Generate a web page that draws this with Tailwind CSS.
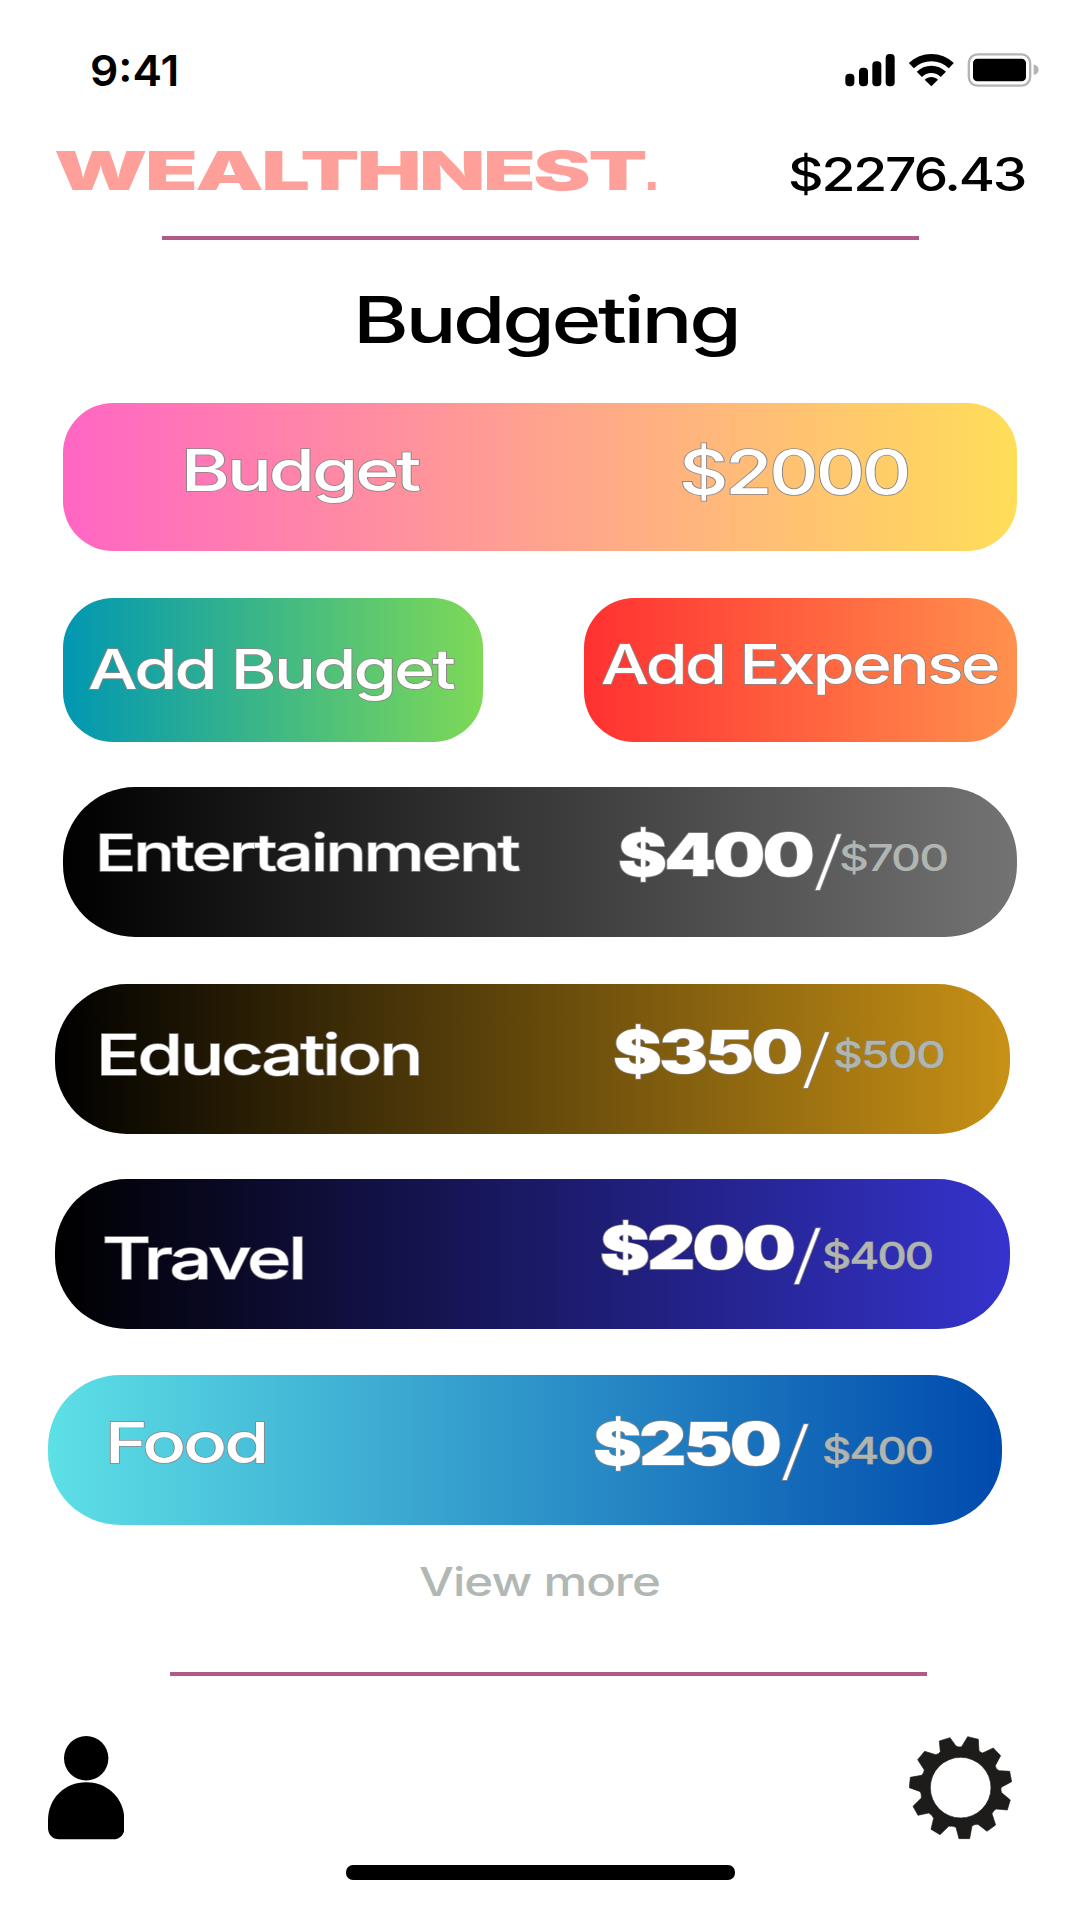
<!DOCTYPE html>
<html lang="en">
<head>
<meta charset="utf-8">
<title>WealthNest – Budgeting</title>
<script src="https://cdn.jsdelivr.net/npm/@tailwindcss/browser@4"></script>
</head>
<body class="bg-white">
<main class="flex h-[1920px] w-[1080px] flex-col overflow-hidden bg-white font-[Inter,sans-serif] leading-none whitespace-nowrap text-black">

  <!-- Status bar -->
  <div class="flex h-[143px] shrink-0 items-start justify-between pr-[20px] pl-[89.9px]">
    <span class="mt-[49px] origin-left scale-x-[1.03] text-[43px] font-semibold">9:41</span>
    <svg class="mt-[30px] h-[80px] w-[240px]" viewBox="0 0 720 240">
      <rect x="76" y="131" width="27" height="38" rx="12"/>
      <rect x="117" y="113" width="27" height="56" rx="12"/>
      <rect x="157" y="94" width="27" height="75" rx="12"/>
      <rect x="197" y="72" width="27" height="97" rx="12"/>
      <g fill="none" stroke="#000" stroke-width="22">
        <path d="M274 107C308 75 360 75 394 107"/>
        <path d="M298 133C318 113 350 113 370 133"/>
      </g>
      <path d="M314 149C326 138 342 138 354 149L334 169Z"/>
      <rect x="446.500" y="73" width="184" height="94" rx="26" fill="none" stroke="#b4b4b4" stroke-width="7"/>
      <rect x="459" y="86" width="159" height="68" rx="13"/>
      <path d="M641 103C651 106 656 112 656 119S651 132 641 135Z" fill="#b4b4b4"/>
    </svg>
  </div>

  <!-- Brand and balance -->
  <header class="flex h-[93.300px] shrink-0 items-start pt-px pl-[54.2px]">
    <span class="w-[370px] shrink-0 origin-left scale-x-[1.6] text-[54px] font-black tracking-[-0.03em] text-[#ff9f99]">WEALTHNEST</span>
    <span class="ml-[220px] w-[14px] shrink-0 font-['Liberation_Sans'] text-[54px] font-bold text-[#ff9f99]">.</span>
    <span class="mt-[7px] ml-[129.7px] w-[198px] shrink-0 origin-left scale-x-[1.2] text-[46px] font-medium tracking-[-0.04em]">$2276.43</span>
  </header>
  <div class="ml-[162px] h-[4px] w-[757px] shrink-0 bg-[#b05a89]"></div>

  <h1 class="mt-[47.600px] ml-[352.9px] h-[115px] w-[293px] shrink-0 origin-left scale-x-[1.315] text-[64.6px] font-medium tracking-[-0.04em]">Budgeting</h1>

  <!-- Total budget -->
  <section class="ml-[62.700px] flex h-[148.5px] w-[954.6px] shrink-0 items-start rounded-[50px] bg-linear-to-r/srgb from-[#ff66c4] to-[#ffde59] pt-px text-white [paint-order:stroke_fill] [-webkit-text-stroke:1.6px_#8c8686]">
    <span class="mt-[38px] ml-[118.100px] w-[183px] shrink-0 origin-left scale-x-[1.297] text-[57.5px] font-medium tracking-[-0.04em]">Budget</span>
    <span class="mt-[38.5px] ml-[315.300px] w-[183px] shrink-0 origin-left scale-x-[1.253] text-[61px] font-medium tracking-[-0.04em]">$2000</span>
  </section>

  <!-- Actions -->
  <div class="mt-[46.2px] flex h-[144px] shrink-0 gap-[101.2px] pl-[62.700px] text-white [paint-order:stroke_fill] [-webkit-text-stroke:1.6px_#8c8686]">
    <button class="flex w-[420.1px] shrink-0 items-start rounded-[50px] bg-linear-to-r/srgb from-[#0097b2] to-[#7ed957]">
      <span class="mt-[43.6px] ml-[25.500px] w-[290px] shrink-0 origin-left scale-x-[1.259] text-left text-[55.5px] leading-none font-medium tracking-[-0.04em]">Add Budget</span>
    </button>
    <button class="flex w-[433.3px] shrink-0 items-start rounded-[50px] bg-linear-to-r/srgb from-[#ff3131] to-[#ff914d]">
      <span class="mt-[39.6px] ml-[16.800px] w-[322px] shrink-0 origin-left scale-x-[1.232] text-left text-[55px] leading-none font-medium tracking-[-0.04em]">Add Expense</span>
    </button>
  </div>

  <!-- Categories -->
  <section class="flex shrink-0 flex-col text-white [paint-order:stroke_fill] [-webkit-text-stroke:1.4px_#8c8686]">
    <div class="mt-[45.5px] ml-[62.700px] flex h-[150px] w-[954.6px] items-start rounded-[72px] bg-linear-to-r/srgb from-[#000000] to-[#737373] pt-px">
      <span class="mt-[39px] ml-[32.8px] w-[316px] shrink-0 origin-left scale-x-[1.34] text-[51px] font-medium tracking-[-0.04em]">Entertainment</span>
      <span class="mt-[38px] ml-[206.6px] w-[154px] shrink-0 origin-left scale-x-[1.256] text-[58.7px] font-black tracking-[-0.04em]">$400</span>
      <span class="mt-[39.7px] ml-[40.6px] w-[22px] shrink-0 origin-left scale-x-[1.43] text-[64px] font-extralight">/</span>
      <span class="mt-[50.5px] ml-[4.3px] w-[86px] shrink-0 origin-left scale-x-[1.255] text-[37px] font-medium tracking-[-0.04em] text-[#afb6b2] [-webkit-text-stroke:0px]">$700</span>
    </div>
    <div class="mt-[46.8px] ml-[55px] flex h-[150px] w-[955px] items-start rounded-[72px] bg-linear-to-r/srgb from-[#000000] to-[#c89116] pt-px">
      <span class="mt-[42px] ml-[40.7px] w-[250px] shrink-0 origin-left scale-x-[1.301] text-[56.5px] font-medium tracking-[-0.04em]">Education</span>
      <span class="mt-[38.6px] ml-[266.9px] w-[150px] shrink-0 origin-left scale-x-[1.252] text-[58.7px] font-black tracking-[-0.04em]">$350</span>
      <span class="mt-[40.7px] ml-[38px] w-[22px] shrink-0 origin-left scale-x-[1.43] text-[64px] font-extralight">/</span>
      <span class="mt-[51.5px] ml-[10.6px] w-[89px] shrink-0 origin-left scale-x-[1.252] text-[37px] font-medium tracking-[-0.04em] text-[#afb6b2] [-webkit-text-stroke:0.8px_#8c8686]">$500</span>
    </div>
    <div class="mt-[45.2px] ml-[55px] flex h-[150px] w-[955px] items-start rounded-[72px] bg-linear-to-r/srgb from-[#000000] to-[#3533cd] pt-px">
      <span class="mt-[49.5px] ml-[46.7px] w-[153px] shrink-0 origin-left scale-x-[1.32] text-[57px] font-medium tracking-[-0.04em]">Travel</span>
      <span class="mt-[39.3px] ml-[344.9px] w-[151px] shrink-0 origin-left scale-x-[1.277] text-[58.7px] font-black tracking-[-0.04em]">$200</span>
      <span class="mt-[41.8px] ml-[41.9px] w-[22px] shrink-0 origin-left scale-x-[1.43] text-[64px] font-extralight">/</span>
      <span class="mt-[56.5px] ml-[7.7px] w-[90px] shrink-0 origin-left scale-x-[1.225] text-[37px] font-medium tracking-[-0.04em] text-[#afb6b2] [-webkit-text-stroke:0.8px_#8c8686]">$400</span>
    </div>
    <div class="mt-[46.4px] ml-[47.700px] flex h-[150px] w-[954.8px] items-start rounded-[72px] bg-linear-to-r/srgb from-[#5de0e6] to-[#004aad] pt-px">
      <span class="mt-[38.6px] ml-[56.9px] w-[125px] shrink-0 origin-left scale-x-[1.286] text-[56.5px] font-medium tracking-[-0.04em]">Food</span>
      <span class="mt-[39px] ml-[363.1px] w-[148px] shrink-0 origin-left scale-x-[1.254] text-[58.7px] font-black tracking-[-0.04em]">$250</span>
      <span class="mt-[41.5px] ml-[39.300px] w-[22px] shrink-0 origin-left scale-x-[1.43] text-[64px] font-extralight">/</span>
      <span class="mt-[56px] ml-[20.4px] w-[90px] shrink-0 origin-left scale-x-[1.225] text-[37px] font-medium tracking-[-0.04em] text-[#afb6b2] [-webkit-text-stroke:0.8px_#8c8686]">$400</span>
    </div>
  </section>

  <a class="mt-[36.5px] ml-[419.3px] h-[110px] w-[191px] shrink-0 origin-left scale-x-[1.262] text-[39px] font-medium tracking-[-0.02em] text-[#b1b8b4]">View more</a>
  <div class="ml-[169.5px] h-[4px] w-[757px] shrink-0 bg-[#b05a89]"></div>

  <!-- Bottom navigation -->
  <nav class="flex h-[189px] shrink-0 items-start justify-between pr-[68px] pl-[47.600px]">
    <svg class="mt-[60.500px] h-[103.500px] w-[76.400px]" viewBox="0 0 76.4 103.5">
      <circle cx="38.200" cy="22.200" r="22.200"/>
      <path d="M0 84.500C0 62 17 46.300 38.200 46.300S76.400 62 76.400 84.500V92C76.400 98.500 72 103.300 65.500 103.300H11C4.500 103.300 0 98.500 0 92Z"/>
    </svg>
    <svg class="mt-[60.500px] h-[103.300px] w-[103.300px]" viewBox="87 80 310 310">
      <path fill="#1d1c1a" fill-rule="evenodd" stroke="#1d1c1a" stroke-width="2" stroke-linejoin="round" d="M178 95L210 85L228 110Q236 115 245 112L263 82L295 90L297 124Q302 130 308 131L340 116L362 139L346 169Q347 179 357 184L389 186L395 217L364 234Q361 242 365 250L391 272L382 302L348 299Q340 304 336 313L347 347L321 366L294 345Q284 344 276 350L269 388L237 388L228 354Q216 349 206 351L180 376L153 360L161 327Q156 315 146 311L114 318L99 291L124 266Q125 255 121 247L88 235L91 204L125 198Q132 191 133 182L113 151L134 126L167 136Q177 134 181 127ZM333 235A91 91 0 1 0 151 235A91 91 0 1 0 333 235Z"/>
    </svg>
  </nav>
  <div class="ml-[346px] h-[15px] w-[389px] shrink-0 rounded-[7px] bg-black"></div>
</main>
</body>
</html>
